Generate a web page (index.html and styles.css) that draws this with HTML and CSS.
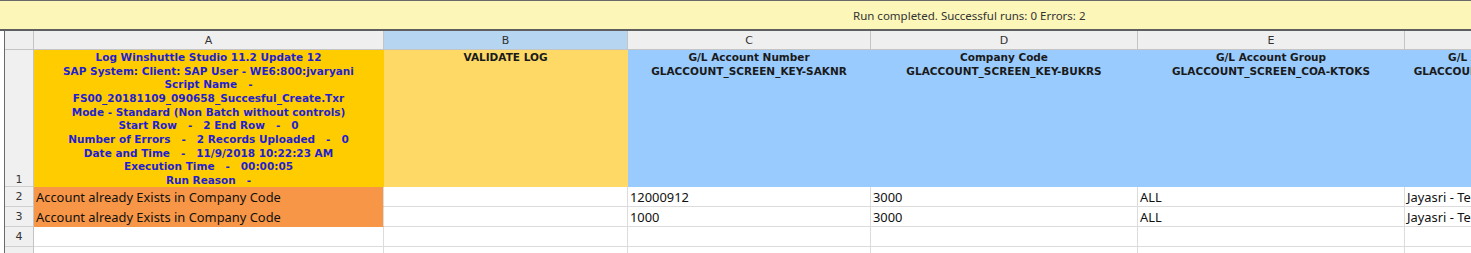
FILE: index.html
```html
<!DOCTYPE html>
<html>
<head>
<meta charset="utf-8">
<link rel="stylesheet" href="styles.css">
</head>
<body>
<div class="banner"><span class="banner-text">Run completed. Successful runs: 0 Errors: 2</span></div>
<div class="sheet">
  <div class="corner"></div>
  <div class="colh">A</div>
  <div class="colh sel">B</div>
  <div class="colh">C</div>
  <div class="colh">D</div>
  <div class="colh">E</div>
  <div class="colh">F</div>

  <div class="rowh bottom">1</div>
  <div class="cell log">
    <div>Log Winshuttle Studio 11.2 Update 12</div>
    <div>SAP System: Client: SAP User - WE6:800:jvaryani</div>
    <div>Script Name &nbsp; - </div>
    <div>FS00_20181109_090658_Succesful_Create.Txr</div>
    <div>Mode - Standard (Non Batch without controls)</div>
    <div>Start Row &nbsp; - &nbsp; 2 End Row &nbsp; - &nbsp; 0</div>
    <div>Number of Errors &nbsp; - &nbsp; 2 Records Uploaded &nbsp; - &nbsp; 0</div>
    <div>Date and Time &nbsp; - &nbsp; 11/9/2018 10:22:23 AM</div>
    <div>Execution Time &nbsp; - &nbsp; 00:00:05</div>
    <div>Run Reason &nbsp; - </div>
  </div>
  <div class="cell validate">VALIDATE LOG</div>
  <div class="cell field"><div>G/L Account Number</div><div>GLACCOUNT_SCREEN_KEY-SAKNR</div></div>
  <div class="cell field"><div>Company Code</div><div>GLACCOUNT_SCREEN_KEY-BUKRS</div></div>
  <div class="cell field"><div>G/L Account Group</div><div>GLACCOUNT_SCREEN_COA-KTOKS</div></div>
  <div class="cell field"><div>G/L Acct Short Text</div><div>GLACCOUNT_NAME_COA-TXT20</div></div>

  <div class="rowh">2</div>
  <div class="cell data err">Account already Exists in Company Code</div>
  <div class="cell data"></div>
  <div class="cell data">12000912</div>
  <div class="cell data">3000</div>
  <div class="cell data">ALL</div>
  <div class="cell data">Jayasri - Test</div>

  <div class="rowh">3</div>
  <div class="cell data err">Account already Exists in Company Code</div>
  <div class="cell data"></div>
  <div class="cell data">1000</div>
  <div class="cell data">3000</div>
  <div class="cell data">ALL</div>
  <div class="cell data">Jayasri - Test</div>

  <div class="rowh">4</div>
  <div class="cell data"></div>
  <div class="cell data"></div>
  <div class="cell data"></div>
  <div class="cell data"></div>
  <div class="cell data"></div>
  <div class="cell data"></div>

  <div class="rowh"></div>
  <div class="cell data"></div>
  <div class="cell data"></div>
  <div class="cell data"></div>
  <div class="cell data"></div>
  <div class="cell data"></div>
  <div class="cell data"></div>
</div>
</body>
</html>
```
FILE: styles.css
```css
html, body {
  margin: 0;
  padding: 0;
  background: #ffffff;
  overflow: hidden;
}
body {
  width: 1471px;
  height: 253px;
  font-family: "Noto Sans", "DejaVu Sans", sans-serif;
}
.banner {
  box-sizing: border-box;
  height: 31px;
  background: #fcf6b9;
  border-top: 1px solid #6a6a6a;
  border-bottom: 2px solid #5f5f5f;
  display: flex;
  align-items: center;
  padding-left: 853px;
}
.banner-text {
  font-size: 11.5px;
  color: #333333;
  white-space: nowrap;
}
.sheet {
  margin-left: 4px;
  border-left: 1px solid #6a6a6a;
  display: grid;
  grid-template-columns: 29px 350px 244px 243px 267px 267px 200px;
  grid-template-rows: 19px 137px 20px 20px 20px 20px;
  width: max-content;
}
.sheet > div {
  box-sizing: border-box;
  overflow: hidden;
  white-space: nowrap;
}
.corner, .colh {
  background: #efefef;
  border-right: 1px solid #c4c4c4;
  border-bottom: 1px solid #c4c4c4;
}
.colh {
  font-family: "DejaVu Sans", sans-serif;
  font-size: 11px;
  color: #333333;
  display: flex;
  align-items: center;
  justify-content: center;
}
.colh.sel {
  background: #b5d5f1;
}
.rowh {
  background: #f0f0f0;
  border-right: 1px solid #c4c4c4;
  border-bottom: 1px solid #cfcfcf;
  font-family: "DejaVu Sans", sans-serif;
  font-size: 11px;
  color: #333333;
  display: flex;
  align-items: center;
  justify-content: center;
}
.rowh.bottom {
  align-items: flex-end;
  padding-bottom: 0;
}
.cell {
  border-right: 1px solid #dcdcdc;
  border-bottom: 1px solid #dcdcdc;
}
.log, .validate, .field {
  font-family: "DejaVu Sans", sans-serif;
  font-weight: bold;
  font-size: 10.5px;
  line-height: 13.67px;
  text-align: center;
  padding-top: 1px;
}
.log {
  background: #ffcc00;
  border-color: #ffcc00;
  color: #1f1fd0;
}
.validate {
  background: #fed966;
  border-color: #fed966;
  color: #1a1a1a;
}
.field {
  background: #99cbfe;
  border-color: #99cbfe;
  color: #1a1a1a;
}
.data {
  font-size: 12.9px;
  color: #111111;
  padding-left: 2px;
  display: flex;
  align-items: center;
}
.data.err {
  background: #f79646;
  border-bottom-color: #f79646;
}
```
